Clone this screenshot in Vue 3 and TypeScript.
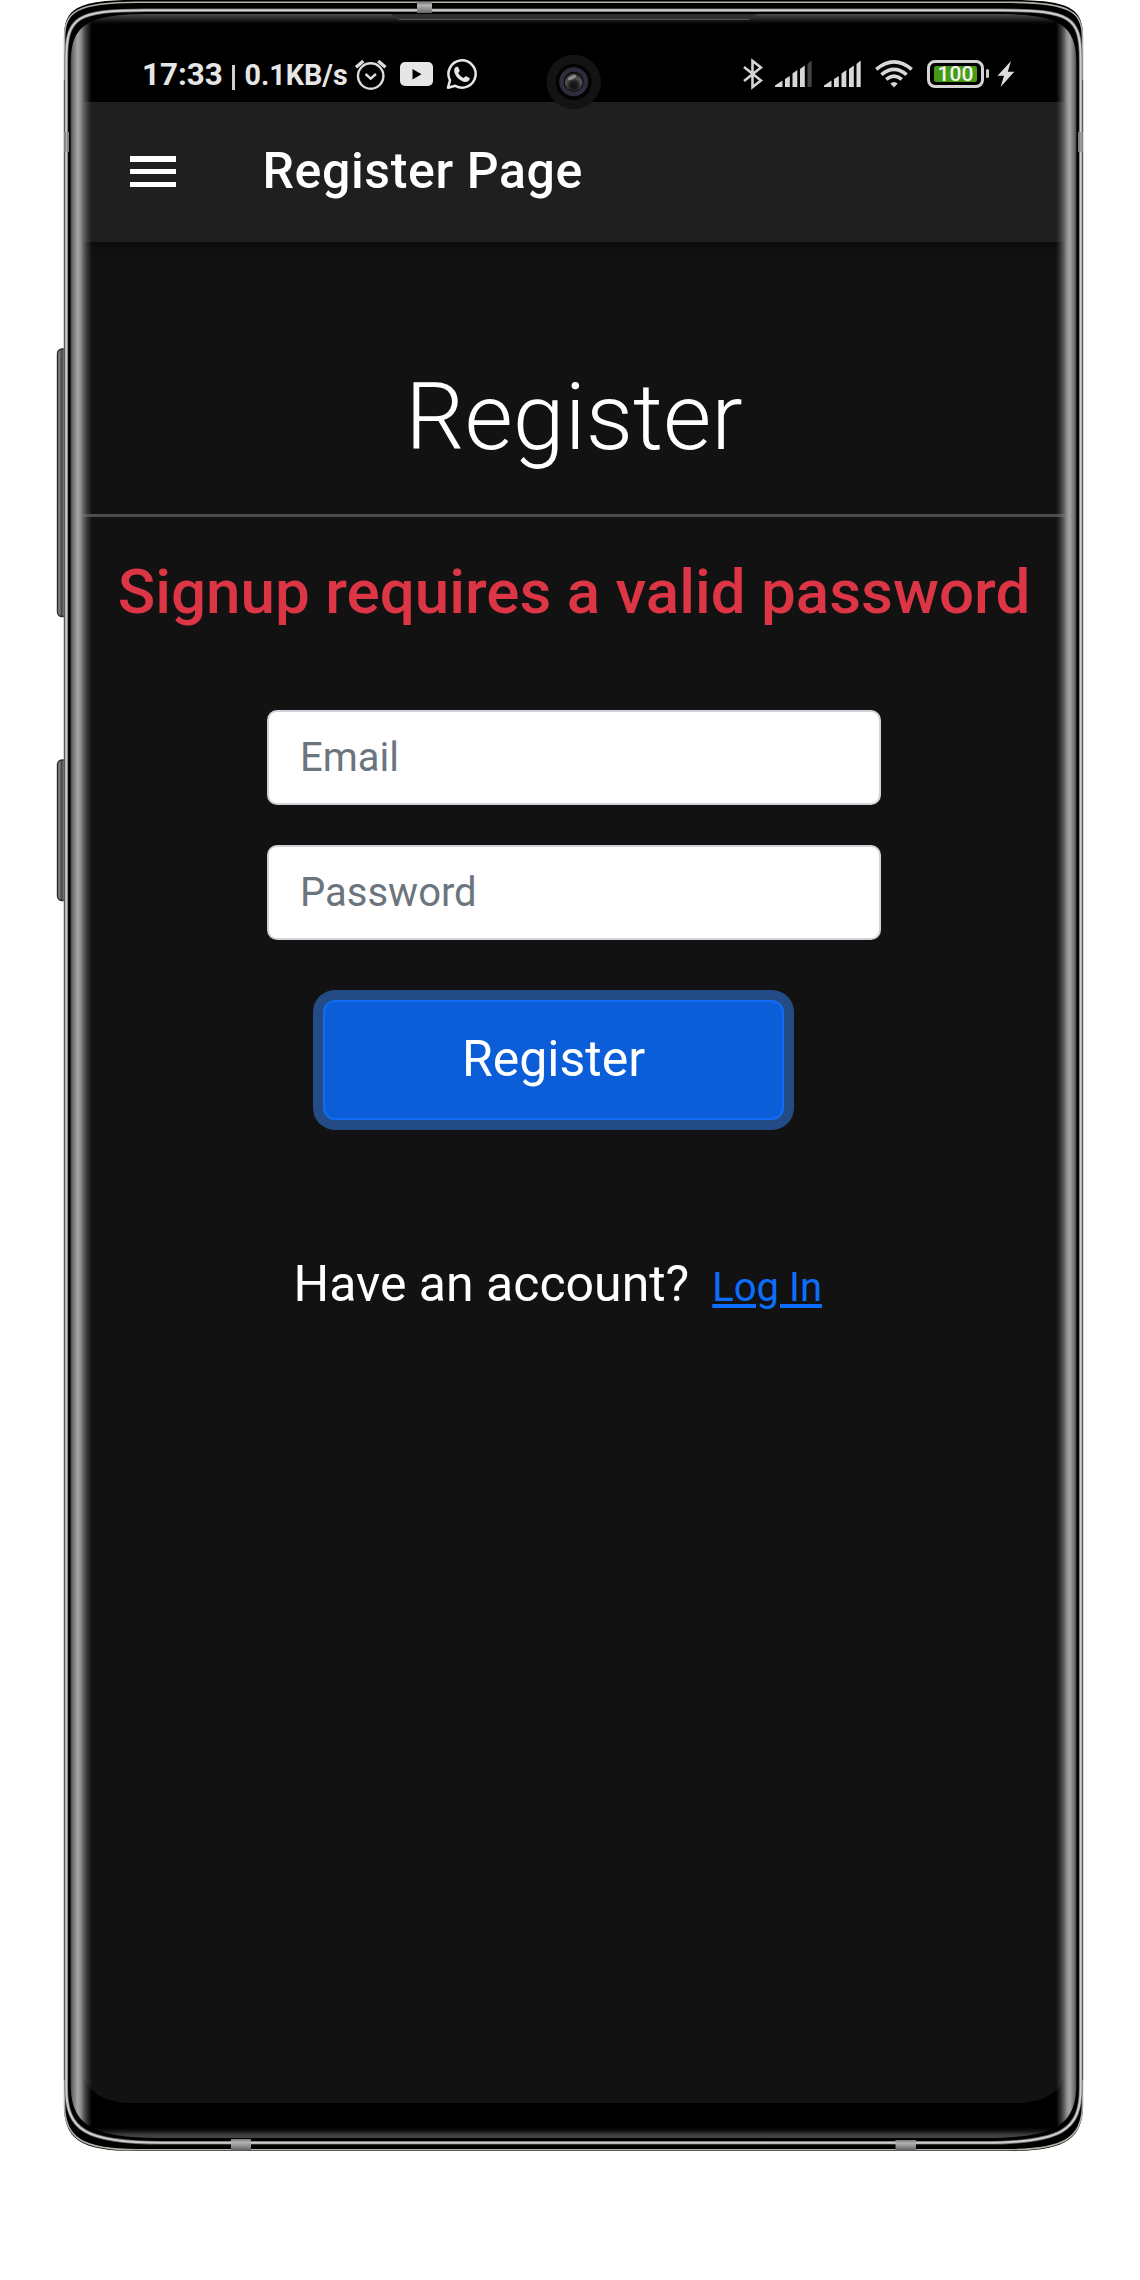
<script setup lang="ts">
import { ref } from 'vue'

const email = ref('')
const password = ref('')
const error = ref('Signup requires a valid password')
</script>

<template>
  <div class="stage">
    <div class="phone">
      <svg class="body" viewBox="0 0 1140 2160" width="1140" height="2160" aria-hidden="true">
        <defs>
          <linearGradient id="key" x1="0" x2="1" y1="0" y2="0">
            <stop offset="0" stop-color="#8a8c90" />
            <stop offset=".2" stop-color="#707274" />
            <stop offset=".25" stop-color="#404142" />
            <stop offset=".35" stop-color="#58595a" />
            <stop offset="1" stop-color="#5c5e5f" />
          </linearGradient>
        </defs>
        <rect x="57.5" y="349" width="14" height="267.5" rx="4.5" fill="url(#key)" stroke="#2b2c2e" stroke-width="1.4" />
        <rect x="57.5" y="760" width="14" height="140.5" rx="4.5" fill="url(#key)" stroke="#2b2c2e" stroke-width="1.4" />
        <path d="M64 38C64 10 74 0 135 0H1012C1073 0 1083 10 1083 38V2105C1083 2139 1065 2151 1010 2151H135C80 2151 64 2139 64 2105Z" fill="#000" />
        <path d="M64.5 60V38C64.5 12 76 2.3 137 2.3H1010C1071 2.3 1082.5 12 1082.5 38V2105C1082.500 2138 1064 2149.7 1008 2149.7H137C82 2149.7 64.5 2138 64.5 2105Z" fill="none" stroke="#b4b2a7" stroke-width="1.6" />
        <path d="M64.6 80V2080M1082.4 80V2080" stroke="#4a4a4a" stroke-width="1.4" />
      </svg>

      <div class="screen">
        <header class="status">
          <span class="clock">17:33</span>
          <span class="rate"><i class="pipe"></i>0.1KB/s</span>
          <svg class="alarm" width="32" height="32" viewBox="0 0 32 32" fill="none" stroke="#dcdcdc">
            <circle cx="15.7" cy="17" r="12.7" stroke-width="2.4" />
            <path d="M10.5 15l5.2 4.700 5.2-4.700" stroke-width="2.4" />
            <path d="M1 8.300L8.300 2M23.200 2l7.300 6.300" stroke-width="3.400" />
          </svg>
          <svg class="youtube" width="33" height="24" viewBox="0 0 33 24">
            <rect width="33" height="24" rx="5" fill="#e6e6e6" />
            <path d="M12.5 7v10.5l9-5.2z" fill="#000" />
          </svg>
          <svg class="whatsapp" width="32" height="32" viewBox="0 0 32 32">
            <path d="M2 29.700L4 22.300A13.600 13.600 0 1 1 9.300 27.800Z" fill="none" stroke="#e6e6e6" stroke-width="2.5" stroke-linejoin="round" />
            <path d="M8.300 11.200C8.600 9.500 9.700 8.800 11 8.700C12 8.600 12.200 9 12.500 9.800L13.600 12.400C13.900 13.300 12.700 14.200 12.200 15C13.400 17.300 15.200 18.900 17.600 20C18.500 19.200 19.200 17.900 20.100 18.200L23.200 19.700C23.900 20.100 23.800 21.200 23.300 22.100C22.300 23.900 19.700 24.500 17.400 23.700C13.300 22.200 10.600 19.700 8.900 15.800C8.300 14.300 8 12.700 8.300 11.200Z" fill="#e6e6e6" />
          </svg>

          <div class="right">
            <svg class="bt" width="20" height="32" viewBox="0 0 20 32" fill="none" stroke="#d4d4d4" stroke-width="2.6">
              <path d="M1 9L18 22.500L9.500 29V3L18 9.500L1 23" />
            </svg>
            <svg class="signal" width="38" height="28" viewBox="0 0 38 28" fill="#d8d8d8">
              <path d="M0 27V25.500L7.500 20.500V27ZM10 27V19L14.800 16V27ZM17.500 27V13.500L22.300 10V27ZM25 27V9L29.800 5.500V27Z" />
              <path d="M32.500 27V4L36.700.5V27Z" fill="#444" />
            </svg>
            <svg class="signal second" width="38" height="28" viewBox="0 0 38 28" fill="#d8d8d8">
              <path d="M0 27V25.500L7.500 20.500V27ZM10 27V19L14.800 16V27ZM17.500 27V13.500L22.300 10V27ZM25 27V9L29.800 5.500V27ZM32.500 27V4L36.700.5V27Z" />
            </svg>
            <svg class="wifi" width="38" height="28" viewBox="0 0 38 28" fill="none" stroke="#d8d8d8" stroke-width="3.6">
              <path d="M1.300 9.300Q19-5.500 36.700 9.300M6.400 14.600Q19 4.200 31.600 14.600M11.200 19.300Q19 12.800 26.800 19.300" />
              <path d="M15.300 23.500Q19 20.500 22.700 23.500L19 27.500Z" fill="#d8d8d8" stroke="none" />
            </svg>
            <span class="battery"><span class="level">100</span></span>
            <i class="terminal"></i>
            <svg class="bolt" width="18" height="28" viewBox="0 0 18 28"><path d="M14 1L.5 15.700H7L3.600 27L17.300 11.700H10.800Z" fill="#dcdcdc" /></svg>
          </div>
        </header>

        <nav class="appbar">
          <button class="menu" aria-label="Menu"><i></i><i></i><i></i></button>
          <span class="title">Register Page</span>
        </nav>

        <main class="content">
          <h1>Register</h1>
          <hr />
          <p class="error">{{ error }}</p>
          <form @submit.prevent>
            <input v-model="email" type="email" placeholder="Email" />
            <input v-model="password" type="password" placeholder="Password" />
            <button class="submit" type="submit">Register</button>
          </form>
          <p class="login">Have an account?<a href="#">Log In</a></p>
        </main>
      </div>

      <svg class="glass" viewBox="0 0 1140 2160" width="1140" height="2160" aria-hidden="true">
        <defs>
          <linearGradient id="left" gradientUnits="userSpaceOnUse" x1="70" x2="92" y1="0" y2="0">
            <stop offset="0" stop-color="#303030" />
            <stop offset=".1" stop-color="#686868" />
            <stop offset=".35" stop-color="#a6a6a6" />
            <stop offset=".5" stop-color="#929292" stop-opacity=".95" />
            <stop offset=".7" stop-color="#707070" stop-opacity=".6" />
            <stop offset="1" stop-color="#555" stop-opacity="0" />
          </linearGradient>
          <linearGradient id="right" gradientUnits="userSpaceOnUse" x1="1077" x2="1056" y1="0" y2="0">
            <stop offset="0" stop-color="#303030" />
            <stop offset=".1" stop-color="#686868" />
            <stop offset=".35" stop-color="#a6a6a6" />
            <stop offset=".5" stop-color="#929292" stop-opacity=".95" />
            <stop offset=".7" stop-color="#707070" stop-opacity=".6" />
            <stop offset="1" stop-color="#555" stop-opacity="0" />
          </linearGradient>
          <linearGradient id="top" x1="0" x2="0" y1="0" y2="1">
            <stop offset="0" stop-color="#4c4c4c" />
            <stop offset=".45" stop-color="#272727" stop-opacity=".9" />
            <stop offset="1" stop-color="#000" stop-opacity="0" />
          </linearGradient>
          <linearGradient id="bottom" x1="0" x2="0" y1="1" y2="0">
            <stop offset="0" stop-color="#484848" />
            <stop offset=".3" stop-color="#3a3a3a" />
            <stop offset="1" stop-color="#000" stop-opacity="0" />
          </linearGradient>
          <linearGradient id="band" x1="0" x2="0" y1="0" y2="1">
            <stop offset="0" stop-color="#777" />
            <stop offset=".3" stop-color="#b5b5b5" />
            <stop offset="1" stop-color="#666" />
          </linearGradient>
          <radialGradient id="lens" cx=".5" cy=".7" r=".6">
            <stop offset="0" stop-color="#111" />
            <stop offset=".35" stop-color="#1b1b1b" />
            <stop offset=".75" stop-color="#555" />
            <stop offset="1" stop-color="#29332f" />
          </radialGradient>
          <clipPath id="inner">
            <path d="M70.500 66C70.500 26 84 14 150 14H997C1063 14 1076.500 26 1076.500 66V2082C1076.500 2124 1058 2138 985 2138H162C89 2138 70.500 2124 70.500 2082Z" />
          </clipPath>
        </defs>
        <g clip-path="url(#inner)">
          <rect x="70" y="14" width="1007" height="12" fill="url(#top)" />
          <rect x="70" y="2126" width="1007" height="12" fill="url(#bottom)" />
          <rect x="70" y="14" width="22" height="2124" fill="url(#left)" />
          <rect x="1056" y="14" width="21" height="2124" fill="url(#right)" />
          <path d="M391 14H757L749 20H399Z" fill="#303030" />
          <path d="M399 19.500H749" stroke="#555" />
        </g>
        <path d="M66.300 60C66.300 17 76 10.300 145 10.300H1002C1071 10.300 1080.700 17 1080.700 60V2088C1080.700 2130 1062 2142.800 985 2142.800H162C85 2142.800 66.300 2130 66.300 2088Z" fill="none" stroke="#686868" stroke-width="3.6" />
        <path d="M66.300 60C66.300 17 76 10.300 145 10.300H1002C1071 10.300 1080.700 17 1080.700 60V2088C1080.700 2130 1062 2142.800 985 2142.800H162C85 2142.800 66.300 2130 66.300 2088Z" fill="none" stroke="#cfcfcf" stroke-width="2" />
        <rect x="417" y="2" width="15" height="11" fill="url(#band)" />
        <rect x="231" y="2139" width="20" height="11" fill="url(#band)" />
        <rect x="895.5" y="2140" width="20.5" height="10" fill="url(#band)" />
        <path d="M64 132H69V152H64ZM1078 132H1083V152H1078Z" fill="#858585" />
        <path d="M66.5 132V152M1081 132V152" stroke="#b0b0b0" />
        <circle cx="573.7" cy="82" r="27.2" fill="#121315" />
        <circle cx="573.7" cy="82" r="18" fill="#030303" />
        <circle cx="573.7" cy="81.7" r="12.2" fill="none" stroke="#302c3d" stroke-width="4.5" />
        <circle cx="573.7" cy="82" r="9" fill="url(#lens)" />
        <ellipse cx="572" cy="77.5" rx="4.5" ry="2" fill="#8a8a8a" transform="rotate(-25 572 77.5)" />
      </svg>
    </div>
  </div>
</template>

<style>
body { background: #fff; }
</style>

<style scoped>
* { box-sizing: border-box; }
svg { display: block; flex: none; }
.stage { width: 1140px; height: 2280px; background: #fff; overflow: hidden; }
.phone { position: relative; width: 1140px; height: 2160px; padding: 14px 75px 0 83px; font-family: Roboto, "Liberation Sans", sans-serif; color: #fff; }
.body, .glass { position: absolute; left: 0; top: 0; pointer-events: none; }
.screen { position: relative; height: 2088.500px; background: #121212; border-radius: 30px 30px 46px 46px / 30px 30px 32px 32px; overflow: hidden; }
.status { height: 88px; padding: 0 50px 0 59px; background: #000; display: flex; align-items: flex-start; color: #e6e6e6; }
.clock, .rate { height: 38px; margin-top: 42px; line-height: 38px; font-weight: 700; white-space: nowrap; }
.clock { width: 90px; font-size: 31.400px; }
.rate { width: 121px; display: flex; align-items: center; font-size: 28.700px; }
.pipe { width: 3px; height: 25px; margin: 4px 9.500px 0 0; background: #cfcfcf; }
.alarm { margin: 44.500px 0 0 2px; }
.youtube { margin: 48px 0 0 13px; }
.whatsapp { margin: 44px 0 0 13px; }
.right { margin-left: auto; display: flex; align-items: center; padding-top: 44px; height: 75px; }
.bt { margin-right: 11.500px; }
.signal { margin-right: 11px; }
.signal.second { margin-right: 13.500px; }
.wifi { margin-right: 14px; }
.battery { width: 57px; height: 28px; padding: 3px; border: 3px solid #d4d4d4; border-radius: 8px; }
.level { display: block; height: 16px; margin: 0 1px; border-radius: 2px; background: #459b13; color: #f4f4f4; font-size: 21px; font-weight: 500; line-height: 17px; text-align: center; }
.terminal { width: 3px; height: 9px; margin: 0 8px 0 2px; border-radius: 2px; background: #ccc; }
.appbar { height: 140px; padding: 0 0 1px 47px; background: #1f1f1f; display: flex; align-items: center; }
.menu { width: 45.500px; height: 31px; padding: 0; border: 0; background: none; display: flex; flex-direction: column; justify-content: space-between; }
.menu i { height: 5.500px; background: #fff; }
.title { margin: -1px 0 0 87px; font-size: 50px; font-weight: 500; letter-spacing: .625px; line-height: 60px; }
.content { height: 1860.500px; padding-top: 119px; background: #121212; box-shadow: inset 0 9px 8px -5px #0c0c0c; }
h1 { margin: 0; font-size: 93.400px; font-weight: 300; line-height: 112px; text-align: center; }
hr { height: 3px; margin: 41px 0 38px; border: 0; background: #4d4d4d; }
.error { margin: 0; font-size: 61.950px; font-weight: 500; line-height: 75px; text-align: center; color: #dc3545; white-space: nowrap; }
form { display: flex; flex-direction: column; padding: 80px 0 0 184px; }
input { width: 614px; height: 95px; margin-bottom: 40px; padding: 0 31px; border: 2px solid #ced4da; border-radius: 10px; background: #fff; font: 400 40px/60px Roboto, "Liberation Sans", sans-serif; outline: 0; }
input::placeholder { color: #6c757d; opacity: 1; }
.submit { width: 461px; height: 119.500px; margin: 20px 0 0 56px; padding: 0; border: 2px solid #126bf4; border-radius: 12px; background: #0b5ed7; box-shadow: 0 0 0 10px #234b86; color: #fff; font: 400 50px/75px Roboto, "Liberation Sans", sans-serif; }
.login { display: flex; align-items: baseline; margin: 126px 0 0 210.500px; font-size: 50px; line-height: 76px; white-space: nowrap; }
.login a { margin-left: 23px; color: #0d6efd; font-size: 40px; line-height: 60px; text-decoration-thickness: 4px; text-underline-offset: 3px; }
</style>
